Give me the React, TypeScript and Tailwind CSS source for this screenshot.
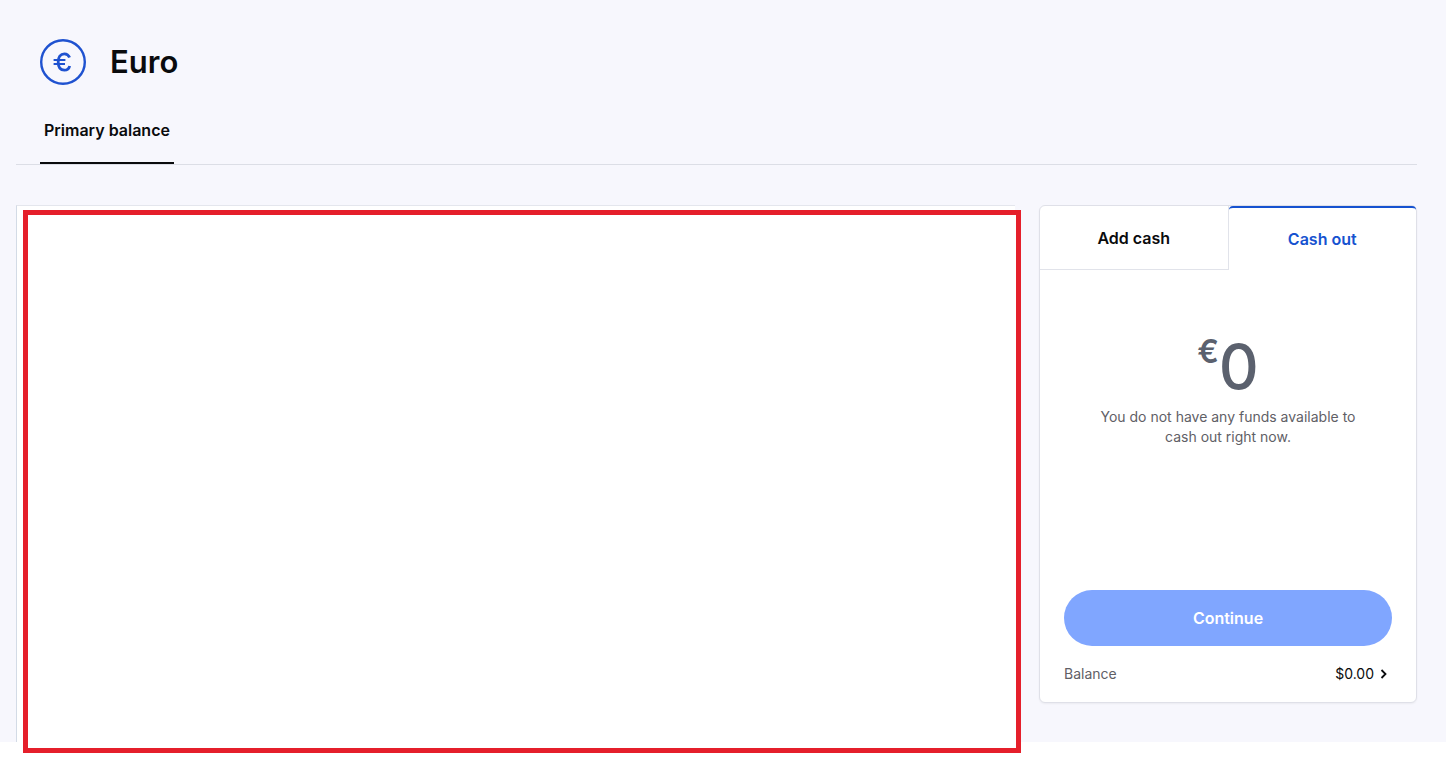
import {useState} from 'react';

const tabs = ['Add cash', 'Cash out'];

const EuroIcon: React.FC = () => (
    <svg width="46" height="46" viewBox="0 0 46 46" fill="none" stroke="#1f52d0" aria-hidden="true">
        <circle cx="23" cy="23" r="21.8" strokeWidth="2.4"/>
        <path d="M29.6 18.6C28.6 16 27 14.8 24.4 14.8C20.4 14.8 18.2 18.2 18.2 23C18.2 28 20.4 31.2 24.4 31.2C27.2 31.2 29 29.8 29.7 27" strokeWidth="2.8"/>
        <path d="M13.6 21H25.4M13.6 25H25" strokeWidth="2"/>
    </svg>
);

const Header: React.FC = () => (
    <header>
        <div className="flex items-center gap-6 pl-6">
            <EuroIcon/>
            <h1 className="text-[31px] font-semibold leading-[44px] text-[#0a0b0d]">Euro</h1>
        </div>
        <nav className="mt-5 flex border-b border-[#dcdee6] pl-6">
            <button type="button" className="h-[59px] border-b-2 border-[#0a0b0d] px-1 pb-2 text-base font-semibold text-[#0a0b0d]">
                Primary balance
            </button>
        </nav>
    </header>
);

const CashCard: React.FC = () => {
    const [activeTab, setActiveTab] = useState<string>('Cash out');

    return (
        <aside className="mb-[39px] w-[378px] shrink-0 rounded-md border border-[#dfe0e8] bg-white shadow-xs">
            <div className="flex">
                {tabs.map(tab => (
                    <button
                        key={tab}
                        type="button"
                        onClick={() => setActiveTab(tab)}
                        className={
                            tab === activeTab
                                ? "h-16 flex-1 rounded-t-sm border-t-2 border-[#1652d0] text-base font-semibold text-[#1652d0]"
                                : "h-16 flex-1 border-r border-b border-[#e1e3ea] text-base font-semibold text-[#0a0b0d]"
                        }
                    >
                        {tab}
                    </button>
                ))}
            </div>
            <div className="px-6 pt-[62px] pb-[18px]">
                <p className="flex items-start justify-center text-[#5b616e]">
                    <span className="text-[32px] font-semibold leading-10">€</span>
                    <span className="text-[62px] font-medium leading-[70px]">0</span>
                </p>
                <p className="mx-auto mt-[5px] w-[270px] text-center text-sm leading-5 text-[#5f6066]">
                    You do not have any funds available to cash out right now.
                </p>
                <button type="button" className="mt-[143px] h-14 w-full rounded-full bg-[#80a6ff] text-base font-semibold text-white">
                    Continue
                </button>
                <div className="mt-[18px] flex items-center justify-between text-sm leading-5">
                    <span className="text-[#5f6066]">Balance</span>
                    <a href="#balance" className="flex items-center gap-1 pr-1 text-[#0a0b0d]">
                        $0.00
                        <svg width="10" height="10" viewBox="0 0 10 10" fill="none" stroke="currentColor" strokeWidth="1.8" aria-hidden="true">
                            <path d="M3.5 1L7.5 5L3.5 9"/>
                        </svg>
                    </a>
                </div>
            </div>
        </aside>
    );
};

const App: React.FC = () => {
    return (
        <div className="bg-white pb-8 font-[Inter,sans-serif]">
            <main className="bg-[#f7f7fd] pt-[39px] pr-[29px] pl-4">
                <Header/>
                <div className="mt-10 flex gap-6">
                    <section className="relative flex-1 border-t border-l border-t-[#e4e6ed] border-l-[#d3dbe6] bg-white">
                        {/* highlight frame, slightly offset from the panel */}
                        <div className="absolute top-1 -right-1.5 -bottom-[11px] left-1.5 border-5 border-[#e51f2b] bg-white"/>
                    </section>
                    <CashCard/>
                </div>
            </main>
        </div>
    );
};

export default App;
